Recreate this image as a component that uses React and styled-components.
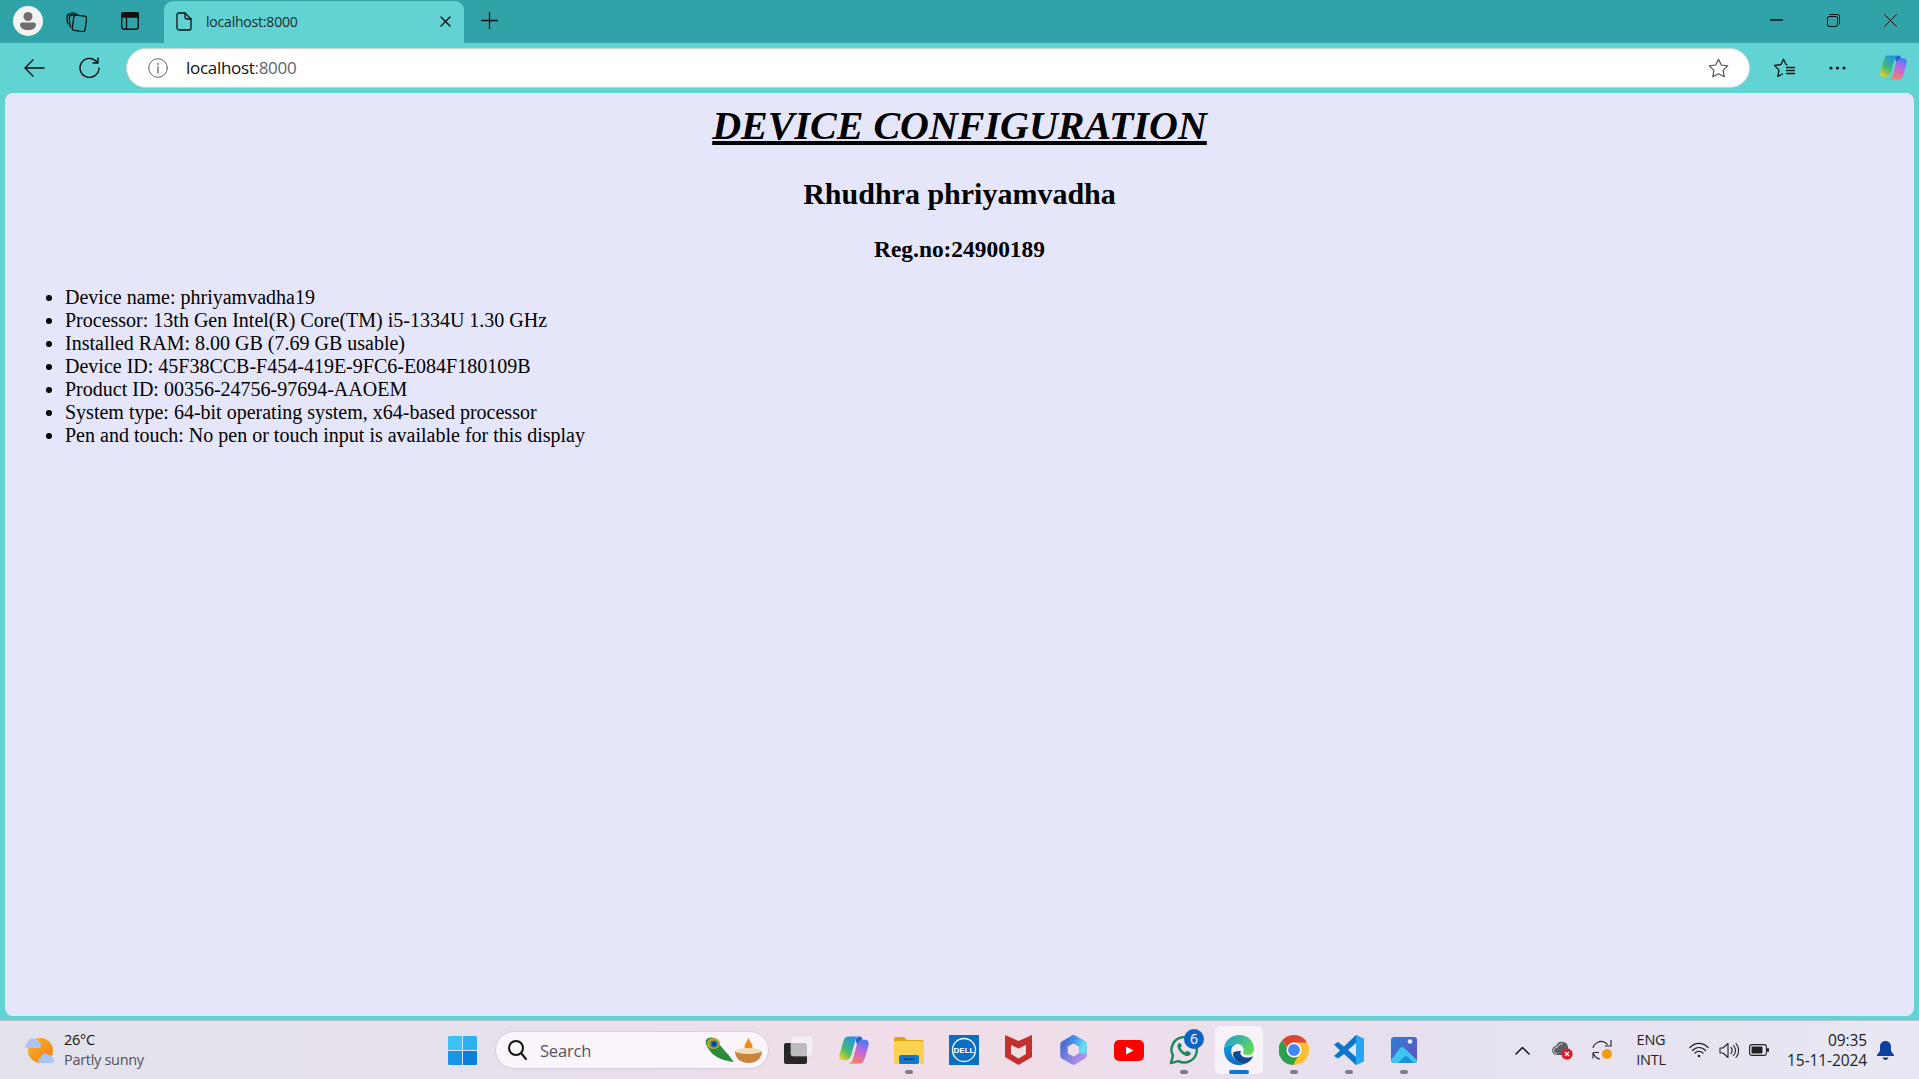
import React from "react";
import styled, { createGlobalStyle } from "styled-components";

const GlobalStyle = createGlobalStyle`
  html, body {
    margin: 0;
    padding: 0;
    height: 100%;
    overflow: hidden;
  }
  #root {
    height: 100%;
  }
`;

const uiFont = `"Open Sans", "Noto Sans", "Liberation Sans", sans-serif`;

const Screen = styled.div`
  display: flex;
  flex-direction: column;
  width: 1919px;
  height: 1079px;
  background: #62d3d3;
  font-family: ${uiFont};
  color: #111;
  overflow: hidden;
`;

/* ---------- tab strip ---------- */
const TabStrip = styled.div`
  display: flex;
  align-items: stretch;
  height: 43px;
  flex-shrink: 0;
  background: #30a3a9;
`;

const ProfileArea = styled.div`
  display: flex;
  align-items: center;
  width: 164px;
  padding-left: 13px;
  padding-bottom: 1px;
  box-sizing: border-box;
`;

const Avatar = styled.div`
  width: 30px;
  height: 30px;
  margin-right: 7px;
  border-radius: 50%;
  background: #f3f3f3;
  display: flex;
  align-items: center;
  justify-content: center;
`;

const ProfileButton = styled.div`
  display: flex;
  justify-content: center;
  width: 53px;
`;

const Tab = styled.div`
  display: flex;
  align-items: center;
  width: 300px;
  margin-top: 1px;
  padding: 0 13px 2px 11px;
  box-sizing: border-box;
  background: #62d3d3;
  border-radius: 9px 9px 0 0;
`;

const TabTitle = styled.span`
  flex: 1;
  margin-left: 14px;
  font-size: 14px;
  letter-spacing: -0.2px;
  color: #1c2a2c;
`;

const NewTab = styled.div`
  display: flex;
  align-items: center;
  margin-left: 17px;
  padding-bottom: 2px;
`;

const WindowControls = styled.div`
  display: flex;
  align-items: center;
  margin-left: auto;
  padding-bottom: 3px;
`;

const WindowButton = styled.div`
  width: 57px;
  display: flex;
  justify-content: center;
`;

/* ---------- toolbar ---------- */
const Toolbar = styled.div`
  display: flex;
  align-items: center;
  height: 50px;
  flex-shrink: 0;
  padding: 0 12px 1px 24px;
  box-sizing: border-box;
`;

const NavButton = styled.div`
  display: flex;
  width: ${(p) => p.$w || 55}px;
  align-items: center;
  flex-shrink: 0;
`;

const AddressBar = styled.div`
  display: flex;
  align-items: center;
  width: 1624px;
  height: 40px;
  flex-shrink: 0;
  padding: 0 20px 0 21px;
  box-sizing: border-box;
  background: #fff;
  border: 1px solid #c9d3d3;
  border-radius: 20px;
`;

const Url = styled.div`
  flex: 1;
  margin-left: 18px;
  font-size: 17px;
  letter-spacing: -0.3px;
  color: #111;
`;

const UrlPort = styled.span`
  color: #5c6670;
`;

const ToolbarActions = styled.div`
  display: flex;
  align-items: center;
  margin-left: auto;
  gap: 34px;
`;

/* ---------- page ---------- */
const Viewport = styled.div`
  flex: 1;
  min-height: 0;
  margin: 0 5px;
  padding: 10px 10px 0;
  box-sizing: border-box;
  background: #e6e6fa;
  border-radius: 8px;
  font-family: "Liberation Serif", "Times New Roman", serif;
  font-size: 20px;
  line-height: 23px;
  color: #000;
`;

const Title = styled.h1`
  margin: 0;
  font-size: 40px;
  line-height: 46px;
  font-weight: 700;
  font-style: italic;
  text-align: center;
  text-decoration: underline;
`;

const Name = styled.h2`
  margin: 28px 0 0;
  font-size: 30px;
  line-height: 34px;
  font-weight: 700;
  text-align: center;
`;

const RegNo = styled.h3`
  margin: 25px 0 0;
  font-size: 23.4px;
  line-height: 27px;
  font-weight: 700;
  text-align: center;
`;

const SpecList = styled.ul`
  margin: 23px 0 0;
  padding: 0 0 0 50px;
`;

const SpecItem = styled.li`
  line-height: 23px;
`;

/* ---------- taskbar ---------- */
const Taskbar = styled.div`
  display: flex;
  align-items: center;
  height: 59px;
  margin-top: 4px;
  flex-shrink: 0;
  box-sizing: border-box;
  border-top: 1px solid #b9c2ca;
  background: linear-gradient(90deg, #e3e2ec 0%, #e6e0ec 25%, #f0dde8 50%, #e6e0ee 72%, #e8e7f2 100%);
`;

const Weather = styled.div`
  display: flex;
  align-items: center;
  width: 435px;
  padding-left: 25px;
  box-sizing: border-box;
  flex-shrink: 0;
`;

const WeatherText = styled.div`
  margin-left: 9px;
  font-size: 14.5px;
  line-height: 20px;
  letter-spacing: -0.3px;
`;

const WeatherSub = styled.div`
  color: #52525c;
`;

const AppSlot = styled.div`
  position: relative;
  display: flex;
  align-items: center;
  justify-content: center;
  flex-shrink: 0;
  width: ${(p) => (p.$active ? 48 : 55)}px;
  margin: 0 ${(p) => (p.$active ? 3.5 : 0)}px;
  height: 48px;
  border-radius: 5px;
  background: ${(p) => (p.$active ? "rgba(255,255,255,0.6)" : "transparent")};
`;

const RunDot = styled.span`
  position: absolute;
  bottom: 0;
  left: 50%;
  transform: translateX(-50%);
  width: ${(p) => (p.$active ? 20 : 8)}px;
  height: 4px;
  border-radius: 2px;
  background: ${(p) => (p.$active ? "#0a78d4" : "#7d7d86")};
`;

const Badge = styled.span`
  position: absolute;
  top: 3px;
  right: 7px;
  width: 20px;
  height: 20px;
  border-radius: 50%;
  background: #0b63c5;
  color: #fff;
  font-size: 14px;
  line-height: 20px;
  text-align: center;
`;

const SearchBox = styled.div`
  display: flex;
  align-items: center;
  flex-shrink: 0;
  width: 274px;
  height: 38px;
  margin: 0 2px 0 5px;
  padding: 0 6px 0 11px;
  box-sizing: border-box;
  background: #f9f5fa;
  border: 1px solid #d4cedb;
  border-radius: 19px;
`;

const SearchLabel = styled.span`
  flex: 1;
  margin-left: 13px;
  font-size: 16.5px;
  letter-spacing: -0.2px;
  color: #55525c;
`;

const Tray = styled.div`
  display: flex;
  align-items: center;
  margin-left: auto;
  padding-right: 25px;
`;

const TrayIcon = styled.div`
  display: flex;
  justify-content: center;
  width: ${(p) => p.$w || 30}px;
  margin-right: ${(p) => p.$mr || 0}px;
`;

const Lang = styled.div`
  width: 48px;
  margin-right: 9px;
  text-align: center;
  font-size: 14.5px;
  line-height: 20px;
  letter-spacing: -0.2px;
  color: #222;
`;

const Clock = styled.div`
  width: 84px;
  margin-right: 10px;
  text-align: right;
  font-size: 15.5px;
  line-height: 20px;
  letter-spacing: -0.1px;
  white-space: nowrap;
  color: #222;
`;

/* ---------- icons ---------- */
const Stroke = ({ w = 20, h = 20, vb, color = "#111", sw = 1.3, children }) => (
  <svg width={w} height={h} viewBox={vb || `0 0 ${w} ${h}`} fill="none" stroke={color} strokeWidth={sw} strokeLinecap="round" strokeLinejoin="round">
    {children}
  </svg>
);

const CopilotIcon = ({ id, size }) => (
  <svg width={size} height={size} viewBox="0 0 28 28">
    <defs>
      <linearGradient id={`${id}a`} x1="0.1" y1="1" x2="0.8" y2="0">
        <stop offset="0" stopColor="#f4d21f" />
        <stop offset="0.4" stopColor="#45bb74" />
        <stop offset="1" stopColor="#1a8fec" />
      </linearGradient>
      <linearGradient id={`${id}b`} x1="0.7" y1="0" x2="0.3" y2="1">
        <stop offset="0" stopColor="#4a7cf2" />
        <stop offset="0.45" stopColor="#c367de" />
        <stop offset="1" stopColor="#f7825a" />
      </linearGradient>
    </defs>
    <path d="M8 1.500h11c-2.500.5-3.500 2-4 4l-3.500 13c-.8 3-2.500 5-5 5h-3C1 23.500-.3 21 .4 18.500L4 6C4.800 3.500 6 1.500 8 1.500z" fill={`url(#${id}a)`} />
    <path d="M20 26.500H9c2.500-.5 3.500-2 4-4l3.500-13c.8-3 2.500-5 5-5h3C26.500 4.500 28.300 7 27.600 9.500L24 22c-.8 2.500-2 4.500-4 4.500z" fill={`url(#${id}b)`} />
    <path d="M19 1.500c2 0 3 1.500 2.700 3-1.500.3-3.700 1.500-4.700 4.500L15.500 5c.5-2 2-3 3.500-3.500z" fill="#1f62d8" />
  </svg>
);

const WindowsLogo = () => (
  <svg width="29" height="29" viewBox="0 0 29 29">
    <path d="M0 1.500A1.500 1.500 0 0 1 1.500 0H14v14H0z" fill="#3cc2f5" />
    <path d="M15 0h12.500A1.500 1.500 0 0 1 29 1.500V14H15z" fill="#2bb0f0" />
    <path d="M0 15h14v14H1.500A1.500 1.500 0 0 1 0 27.500z" fill="#1796e8" />
    <path d="M15 15h14v12.500a1.500 1.500 0 0 1-1.500 1.500H15z" fill="#0a7fdc" />
  </svg>
);

const WeatherIcon = () => (
  <svg width="30" height="28" viewBox="0 0 30 28">
    <defs>
      <linearGradient id="sun" x1="0" y1="0" x2="1" y2="1">
        <stop offset="0" stopColor="#f8b52c" />
        <stop offset="1" stopColor="#ee7d14" />
      </linearGradient>
    </defs>
    <circle cx="15.500" cy="14.500" r="12.500" fill="url(#sun)" />
    <path d="M3 12c-3.500 0-3.800-4.500-.6-5C3 3 8 1 10 4c3-.5 4.500 1.500 4.500 3 2.300.5 2 5-.5 5z" fill="#a9c6f2" />
    <path d="M16 27c-3.500 0-3.800-4.500-.6-5 .6-4 5.600-6 7.600-3 3-.5 4.500 1.500 4.500 3 2.300.5 2 5-.5 5z" fill="#a9c6f2" />
  </svg>
);

const FeatherIcon = () => (
  <svg width="30" height="26" viewBox="0 0 30 26">
    <path d="M1 3C4-1 11 0 13 5c2 4 8 9 16 20-9-1-19-4-24-11C2 10 0 6 1 3z" fill="#2b8b3b" />
    <ellipse cx="8.500" cy="6.500" rx="6.500" ry="5.500" fill="#b8a52a" />
    <circle cx="9" cy="7" r="3.600" fill="#0f6cb5" />
    <circle cx="9" cy="7" r="1.500" fill="#0a2a5a" />
  </svg>
);

const LampIcon = () => (
  <svg width="27" height="25" viewBox="0 0 27 25">
    <path d="M13.500 0c2 4 4 6 4 9 0 2-2 3.500-4 3.500s-4-1.500-4-3.500c0-3 2-5 4-9z" fill="#f08a1d" />
    <path d="M0 13c5 2 22 2 27 0 0 7-5 12-13.500 12S0 20 0 13z" fill="#c9853f" />
    <ellipse cx="13.500" cy="13" rx="13" ry="3" fill="#f3dfb7" />
  </svg>
);

const TaskView = () => (
  <svg width="29" height="28" viewBox="0 0 29 28">
    <rect x="0" y="7" width="23" height="21" rx="2" fill="#272727" />
    <rect x="7" y="0" width="22" height="20" rx="2" fill="#f7f5f8" fillOpacity="0.72" stroke="#d4d0d8" strokeWidth="0.6" />
  </svg>
);

const FolderIcon = () => (
  <svg width="30" height="27" viewBox="0 0 30 27">
    <path d="M0 2a2 2 0 0 1 2-2h8l3 3h15a2 2 0 0 1 2 2v5H0z" fill="#e0a30e" />
    <rect x="0" y="4" width="30" height="23" rx="1.500" fill="#fbd24f" />
    <rect x="5" y="18" width="20" height="9" rx="2" fill="#0f78d0" />
    <rect x="10" y="21.500" width="10" height="1.500" fill="#07396b" />
  </svg>
);

const DellIcon = () => (
  <svg width="30" height="30" viewBox="0 0 30 30">
    <rect width="30" height="30" fill="#0a6fc2" />
    <circle cx="15" cy="15" r="11.500" fill="none" stroke="#fff" strokeWidth="1.300" />
    <text x="15" y="18" textAnchor="middle" fontFamily="Liberation Sans, sans-serif" fontWeight="700" fontSize="8" fill="#fff">DELL</text>
  </svg>
);

const McAfeeIcon = () => (
  <svg width="27" height="30" viewBox="0 0 27 30">
    <path d="M0 3l13.500 5L27 0v22l-13.500 8L0 22V3z" fill="#c3302f" />
    <path d="M0 0l13.500 6L27 0v5L13.500 9 0 5z" fill="#c3302f" />
    <path d="M6 10l7.500 3.500L21 10v9l-7.500 4.500L6 19z" fill="#ecdfe6" />
  </svg>
);

const M365Icon = () => (
  <svg width="27" height="30" viewBox="0 0 27 30" fill="none" strokeWidth="7.500" strokeLinejoin="round" strokeLinecap="round">
    <defs>
      <linearGradient id="m1" x1="0" y1="0" x2="1" y2="1">
        <stop offset="0" stopColor="#3f6fd4" />
        <stop offset="1" stopColor="#bb90e8" />
      </linearGradient>
      <linearGradient id="m2" x1="0" y1="0" x2="1" y2="0.600">
        <stop offset="0" stopColor="#3d8ee2" />
        <stop offset="1" stopColor="#63dcf0" />
      </linearGradient>
    </defs>
    <path d="M13.500 4L23 9.500v11L13.500 26 4 20.500v-11z" stroke="url(#m1)" />
    <path d="M13.500 4L23 9.500v6" stroke="url(#m2)" />
  </svg>
);

const YouTubeIcon = () => (
  <svg width="30" height="21" viewBox="0 0 30 21">
    <rect width="30" height="21" rx="5" fill="#f00" />
    <path d="M12 6.500l7.500 4-7.500 4z" fill="#fff" />
  </svg>
);

const WhatsAppIcon = () => (
  <svg width="30" height="30" viewBox="0 0 32 32">
    <path d="M2 30l2.200-8A13.500 13.500 0 1 1 10 27.800z" fill="none" stroke="#1c8a5c" strokeWidth="2.600" strokeLinejoin="round" />
    <path d="M11 8.500c-2 1-2.500 3-1.500 5.500 1.500 3.500 4.500 6.500 8 8 2.500 1 4.500 0 5.500-1.500.5-.8.3-1.500-.3-2l-2.700-1.500c-.7-.3-1.200 0-1.600.5l-.9 1c-2.500-1-4.300-2.800-5.300-5l1-1c.5-.5.6-1 .3-1.600L12.300 9c-.3-.6-.8-.8-1.300-.5z" fill="#1c8a5c" />
  </svg>
);

const EdgeIcon = () => (
  <svg width="30" height="30" viewBox="0 0 30 30">
    <defs>
      <linearGradient id="e1" x1="0" y1="0" x2="1" y2="0.700">
        <stop offset="0" stopColor="#1a9bd8" />
        <stop offset="1" stopColor="#66db56" />
      </linearGradient>
      <linearGradient id="e2" x1="0" y1="0" x2="0.500" y2="1">
        <stop offset="0" stopColor="#12a0e0" />
        <stop offset="1" stopColor="#0b6cc4" />
      </linearGradient>
    </defs>
    <path d="M0 13c2-3 7-4 13-4-5 1-7 6-5 11 2 5 7 8 12 9-2 1-4 1-5 1C6 30 0 23 0 15z" fill="url(#e2)" />
    <path d="M0 13C1 5 8 0 15 0c9 0 15 6 15 14 0 4-3 6-6 6-3 0-5-1-5-2 2-3 0-9-6-9C7 9 2 10 0 13z" fill="url(#e1)" />
    <path d="M9 19c0 5 5 9 11 10 4-1 8-4 9-8-3 2-8 2-11 0-2-1.500-2-3-1-5-3 0-8 0-8 3z" fill="#0b4a97" />
  </svg>
);

const ChromeIcon = () => (
  <svg width="30" height="30" viewBox="0 0 32 32">
    <circle cx="16" cy="16" r="16" fill="#fbc02d" />
    <path d="M16 0a16 16 0 0 1 13.900 8H16a8 8 0 0 0-7.500 5.200L3.500 5.500A16 16 0 0 1 16 0z" fill="#db4437" />
    <path d="M3.500 5.500l6.900 12A8 8 0 0 0 20 23.300L15 32A16 16 0 0 1 3.500 5.500z" fill="#2e9e4f" />
    <circle cx="16" cy="16" r="8" fill="#fff" />
    <circle cx="16" cy="16" r="6.300" fill="#4285f4" />
  </svg>
);

const VsCodeIcon = () => (
  <svg width="30" height="30" viewBox="0 0 30 30">
    <path d="M22 0l8 4v22l-8 4-12-11-6 4.500-4-2.500 6-5.500L0 9.500 4 7l6 4.500z" fill="#0a78c8" />
    <path d="M22 8v14l-8-7z" fill="#e6e2ee" />
    <path d="M22 0l8 4v22l-8 4z" fill="#27a5f2" />
  </svg>
);

const PhotosIcon = () => (
  <svg width="26" height="26" viewBox="0 0 26 26">
    <defs>
      <linearGradient id="p1" x1="0" y1="0" x2="1" y2="1">
        <stop offset="0" stopColor="#2a7fd8" />
        <stop offset="1" stopColor="#6a4fb8" />
      </linearGradient>
    </defs>
    <rect width="26" height="26" rx="3" fill="url(#p1)" />
    <circle cx="19" cy="4.500" r="2.300" fill="#e6eefc" />
    <path d="M0 23l9-12c1.500-1.500 3-1.500 4 0l13 12v0a3 3 0 0 1-3 3H3a3 3 0 0 1-3-3z" fill="#3fc5f0" />
    <path d="M7 26l6-6c1-1 3-1 4 0l6 6z" fill="#1b8fd8" />
  </svg>
);

const specs = [
  "Device name: phriyamvadha19",
  "Processor: 13th Gen Intel(R) Core(TM) i5-1334U 1.30 GHz",
  "Installed RAM: 8.00 GB (7.69 GB usable)",
  "Device ID: 45F38CCB-F454-419E-9FC6-E084F180109B",
  "Product ID: 00356-24756-97694-AAOEM",
  "System type: 64-bit operating system, x64-based processor",
  "Pen and touch: No pen or touch input is available for this display",
];

const App = () => (
  <Screen>
    <GlobalStyle />
    <TabStrip>
      <ProfileArea>
        <Avatar>
          <svg width="20" height="20" viewBox="0 0 20 20" fill="#6f6f6f">
            <circle cx="10" cy="5.500" r="4.500" />
            <path d="M2 13.500c0-1 1-2 2-2h12c1 0 2 1 2 2 0 3.500-3 5.500-8 5.500s-8-2-8-5.500z" />
          </svg>
        </Avatar>
        <ProfileButton>
          <Stroke w={21} h={21}>
            <rect x="7" y="4.500" width="13" height="15.500" rx="2.500" transform="rotate(8 13 12)" />
            <path d="M4.500 16C3.800 13 3.300 9 3.300 7c0-1.500 1-2.700 2.500-3l5-1" />
            <path d="M1.800 13C1 10 1 7.500 1 6c0-1.500 1-2.700 2.400-3l4.500-1.500" />
          </Stroke>
        </ProfileButton>
        <ProfileButton>
          <svg width="18" height="18" viewBox="0 0 18 18" fill="none" stroke="#111" strokeWidth="1.400">
            <rect x="0.700" y="0.700" width="16.600" height="16.600" rx="2.500" />
            <path d="M1 1h16v4H1z" fill="#111" />
            <path d="M5.500 5v12" />
          </svg>
        </ProfileButton>
      </ProfileArea>
      <Tab>
        <Stroke w={17} h={19}>
          <path d="M2 3a2 2 0 0 1 2-2h6l6 6v9a2 2 0 0 1-2 2H4a2 2 0 0 1-2-2z" />
          <path d="M10 1v4a2 2 0 0 0 2 2h4" />
        </Stroke>
        <TabTitle>localhost:8000</TabTitle>
        <Stroke w={11} h={11} sw={1.4}>
          <path d="M1 1l9 9M10 1l-9 9" />
        </Stroke>
      </Tab>
      <NewTab>
        <Stroke w={17} h={17} sw={1.3}>
          <path d="M8.500 0.500v16M0.500 8.500h16" />
        </Stroke>
      </NewTab>
      <WindowControls>
        <WindowButton>
          <Stroke w={13} h={2}>
            <path d="M0 1h13" />
          </Stroke>
        </WindowButton>
        <WindowButton>
          <Stroke w={13} h={13} sw={1}>
            <rect x="0.500" y="2.500" width="10" height="10" rx="1.500" />
            <path d="M3 .5h7.500a2 2 0 0 1 2 2V10" />
          </Stroke>
        </WindowButton>
        <WindowButton>
          <Stroke w={13} h={13} sw={1}>
            <path d="M.5.500l12 12M12.500.500l-12 12" />
          </Stroke>
        </WindowButton>
      </WindowControls>
    </TabStrip>

    <Toolbar>
      <NavButton>
        <Stroke w={21} h={18} sw={1.4}>
          <path d="M20 9H1M9 1L1 9l8 8" />
        </Stroke>
      </NavButton>
      <NavButton $w={47}>
        <Stroke w={21} h={21} sw={1.4}>
          <path d="M18.300 5.500A9.500 9.500 0 1 0 20 11" />
          <path d="M19 1v5h-5" />
        </Stroke>
      </NavButton>
      <AddressBar>
        <Stroke w={20} h={20} color="#5f6468" sw={1}>
          <circle cx="10" cy="10" r="9.300" />
          <path d="M10 9v6M10 5.500v1" strokeWidth="1.300" />
        </Stroke>
        <Url>
          localhost<UrlPort>:8000</UrlPort>
        </Url>
        <Stroke w={21} h={20} color="#555" sw={1.2}>
          <path d="M10.500 1.200l2.800 5.800 6.400.9-4.600 4.500 1.100 6.400-5.700-3-5.700 3 1.100-6.400L1.300 7.900l6.400-.9z" />
        </Stroke>
      </AddressBar>
      <ToolbarActions>
        <Stroke w={21} h={20} sw={1.3}>
          <path d="M13 7l-1-.500L9.500 1.200 7 6.500l-6.400 1 4.400 4.600-1.200 6.400 4.700-2.500" />
          <path d="M12.500 9.500h8M12.500 12.500h8M12.500 15.500h8" />
        </Stroke>
        <svg width="17" height="4" viewBox="0 0 17 4" fill="#111">
          <circle cx="2" cy="2" r="1.600" />
          <circle cx="8.500" cy="2" r="1.600" />
          <circle cx="15" cy="2" r="1.600" />
        </svg>
        <CopilotIcon id="cop1" size={27} />
      </ToolbarActions>
    </Toolbar>

    <Viewport>
      <Title>DEVICE CONFIGURATION</Title>
      <Name>Rhudhra phriyamvadha</Name>
      <RegNo>Reg.no:24900189</RegNo>
      <SpecList>
        {specs.map((s) => (
          <SpecItem key={s}>{s}</SpecItem>
        ))}
      </SpecList>
    </Viewport>

    <Taskbar>
      <Weather>
        <WeatherIcon />
        <WeatherText>
          <div>26°C</div>
          <WeatherSub>Partly sunny</WeatherSub>
        </WeatherText>
      </Weather>
      <AppSlot>
        <WindowsLogo />
      </AppSlot>
      <SearchBox>
        <Stroke w={20} h={22} sw={2}>
          <circle cx="9" cy="9" r="7" />
          <path d="M14 14l5 6" />
        </Stroke>
        <SearchLabel>Search</SearchLabel>
        <FeatherIcon />
        <LampIcon />
      </SearchBox>
      <AppSlot>
        <TaskView />
      </AppSlot>
      <AppSlot>
        <CopilotIcon id="cop2" size={30} />
      </AppSlot>
      <AppSlot>
        <FolderIcon />
        <RunDot />
      </AppSlot>
      <AppSlot>
        <DellIcon />
      </AppSlot>
      <AppSlot>
        <McAfeeIcon />
      </AppSlot>
      <AppSlot>
        <M365Icon />
      </AppSlot>
      <AppSlot>
        <YouTubeIcon />
      </AppSlot>
      <AppSlot>
        <WhatsAppIcon />
        <Badge>6</Badge>
        <RunDot />
      </AppSlot>
      <AppSlot $active>
        <EdgeIcon />
        <RunDot $active />
      </AppSlot>
      <AppSlot>
        <ChromeIcon />
        <RunDot />
      </AppSlot>
      <AppSlot>
        <VsCodeIcon />
        <RunDot />
      </AppSlot>
      <AppSlot>
        <PhotosIcon />
        <RunDot />
      </AppSlot>
      <Tray>
        <TrayIcon $mr={10}>
          <Stroke w={15} h={9} sw={1.5}>
            <path d="M1 8l6.500-6.500L14 8" />
          </Stroke>
        </TrayIcon>
        <TrayIcon $mr={10}>
          <svg width="21" height="19" viewBox="0 0 21 19">
            <path d="M5 14c-3 0-5-2-5-4.500S2 5 4 5c1-3 4-5 7-4 3 0 5 3 5 5v8z" fill="#5d5d66" />
            <path d="M5 12.500c-2 0-3.500-1.200-3.500-3S3 6.500 5 6.500c1-2 3-4 5.500-3.800" fill="none" stroke="#e8e6ef" strokeWidth="1" />
            <circle cx="15" cy="13" r="5.700" fill="#d4202f" />
            <path d="M13 11l4 4M17 11l-4 4" stroke="#fff" strokeWidth="1.200" />
          </svg>
        </TrayIcon>
        <TrayIcon $mr={10}>
          <svg width="21" height="22" viewBox="0 0 21 22" fill="none" stroke="#222" strokeWidth="1.100">
            <path d="M1 9c1-5 7-8 11-6 1.500.5 2.500 1.500 3.500 2.700" />
            <path d="M13 7h6V1M1 13.500h6M1 19.500V14c2 4 5 6 7 6" />
            <circle cx="15" cy="15" r="5" fill="#f59a0c" stroke="none" />
          </svg>
        </TrayIcon>
        <Lang>
          ENG
          <br />
          INTL
        </Lang>
        <TrayIcon>
          <svg width="20" height="16" viewBox="0 0 20 16" fill="none" stroke="#222" strokeWidth="1.200" strokeLinecap="round">
            <path d="M1 5.500c5-5.500 13-5.500 18 0M3.500 8.500c3.500-4 9.500-4 13 0M6 11c2-2.200 6-2.200 8 0" />
            <circle cx="10" cy="14" r="1.300" fill="#222" stroke="none" />
          </svg>
        </TrayIcon>
        <TrayIcon>
          <svg width="20" height="17" viewBox="0 0 20 17" fill="none" stroke="#222" strokeWidth="1.100" strokeLinecap="round" strokeLinejoin="round">
            <path d="M1 6v5h3l5 4.500V1.500L4 6z" />
            <path d="M12 5.500c1.500 1.500 1.500 4.500 0 6M14.500 3.500c2.500 3 2.500 7 0 10M17 1.500c3.500 4 3.500 10 0 14" />
          </svg>
        </TrayIcon>
        <TrayIcon $mr={9}>
          <svg width="20" height="12" viewBox="0 0 20 12">
            <rect x="0.600" y="0.600" width="16.800" height="10.800" rx="2.500" fill="none" stroke="#222" strokeWidth="1.100" />
            <rect x="2.500" y="2.500" width="11" height="7" rx="1" fill="#222" />
            <rect x="18" y="4" width="2" height="4" rx="1" fill="#222" />
          </svg>
        </TrayIcon>
        <Clock>
          09:35
          <br />
          15-11-2024
        </Clock>
        <svg width="17" height="19" viewBox="0 0 17 19" fill="#0b3fa0">
          <path d="M8.500 0c3.500 0 5.500 2.500 5.500 6v4l3 4v1H0v-1l3-4V6c0-3.500 2-6 5.500-6z" />
          <path d="M5.500 16.500h6c-.5 1.500-1.500 2.500-3 2.500s-2.500-1-3-2.500z" />
        </svg>
      </Tray>
    </Taskbar>
  </Screen>
);

export default App;
